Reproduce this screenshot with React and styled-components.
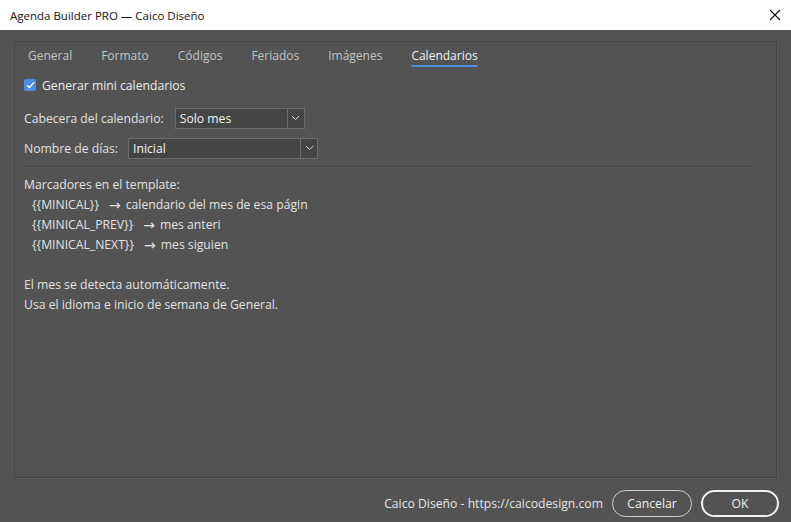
import React from 'react';
import styled, { createGlobalStyle } from 'styled-components';

const GlobalStyle = createGlobalStyle`
  html, body {
    margin: 0;
    padding: 0;
    background: #535353;
  }
  * {
    box-sizing: border-box;
  }
`;

const Window = styled.div`
  display: flex;
  flex-direction: column;
  width: 791px;
  height: 522px;
  background: #535353;
  font-family: 'Segoe UI', 'Open Sans', 'Noto Sans', sans-serif;
  font-size: 12.2px;
  color: #e2e2e2;
  overflow: hidden;
`;

const TitleBar = styled.div`
  display: flex;
  height: 30px;
  flex-shrink: 0;
  align-items: center;
  justify-content: space-between;
  padding: 0 8px 0 10px;
  background: #ffffff;
  color: #111111;
  font-size: 11.5px;
`;

const CloseButton = styled.div`
  display: flex;
  width: 16px;
  height: 16px;
  align-items: center;
  justify-content: center;
`;

const Body = styled.div`
  display: flex;
  flex: 1;
  flex-direction: column;
  padding: 11px 14px 0 14px;
`;

const Panel = styled.div`
  display: flex;
  flex: 1;
  flex-direction: column;
  padding: 0 21px 0 9px;
  border: 1px solid #474747;
  box-shadow: 1px 1px 0 #5c5c5c;
`;

const TabBar = styled.div`
  display: flex;
  height: 28px;
  align-items: center;
  padding-left: 4px;
`;

const Tab = styled.div`
  position: relative;
  margin-right: 29px;
  color: ${props => (props.active ? '#f0f0f0' : '#c4c4c4')};
  font-size: 12px;
  line-height: 16px;
  &::after {
    content: '';
    display: ${props => (props.active ? 'block' : 'none')};
    position: absolute;
    left: 0;
    right: 0;
    bottom: -3px;
    height: 2px;
    border-radius: 1px;
    background: #4d8fdc;
  }
`;

const CheckRow = styled.label`
  display: flex;
  height: 22px;
  align-items: center;
  gap: 6px;
  margin-top: 4px;
  color: #ececec;
`;

const CheckBox = styled.span`
  display: flex;
  width: 12px;
  height: 12px;
  align-items: center;
  justify-content: center;
  border-radius: 2px;
  background: #4b8ee6;
`;

const FieldRow = styled.div`
  display: flex;
  height: 30px;
  align-items: center;
  gap: ${props => props.gap}px;
  margin-top: ${props => props.top || 0}px;
  color: #e0e0e0;
`;

const Select = styled.div`
  display: flex;
  width: ${props => props.width}px;
  height: 21px;
  align-items: stretch;
  border: 1px solid #6c6c6c;
  background: #454545;
  color: #f4f4f4;
`;

const SelectValue = styled.div`
  display: flex;
  flex: 1;
  align-items: center;
  padding-left: 4px;
`;

const SelectArrow = styled.div`
  display: flex;
  width: 17px;
  align-items: center;
  justify-content: center;
  border-left: 1px solid #6c6c6c;
`;

const Separator = styled.div`
  height: 2px;
  margin: 3px 0 7px 0;
  border-top: 1px solid #464646;
  border-bottom: 1px solid #595959;
`;

const TextBlock = styled.div`
  display: flex;
  flex-direction: column;
  line-height: 20px;
  color: #e2e2e2;
`;

const Line = styled.div`
  display: flex;
  height: 20px;
  align-items: center;
  padding-left: ${props => props.indent || 0}px;
  white-space: pre;
`;

const Arrow = styled.span`
  margin: 0 5px 0 10px;
  font-family: 'DejaVu Sans', sans-serif;
  font-size: 14px;
  line-height: 20px;
`;

const Footer = styled.div`
  display: flex;
  height: 44px;
  flex-shrink: 0;
  align-items: center;
  justify-content: flex-end;
  padding: 6px 12px 0 0;
`;

const Credit = styled.span`
  margin-right: 9px;
  color: #e4e4e4;
`;

const PillButton = styled.button`
  width: ${props => props.width}px;
  height: 27px;
  margin-left: ${props => props.gap}px;
  border: ${props => (props.primary ? '2px solid #f2f2f2' : '1px solid #d0d0d0')};
  border-radius: 14px;
  background: transparent;
  color: #f0f0f0;
  font-family: inherit;
  font-size: 12.2px;
  cursor: pointer;
`;

const tabs = [
  { label: 'General' },
  { label: 'Formato' },
  { label: 'Códigos' },
  { label: 'Feriados' },
  { label: 'Imágenes' },
  { label: 'Calendarios', active: true },
];

const markers = [
  { tag: '{{MINICAL}}', desc: 'calendario del mes de esa págin' },
  { tag: '{{MINICAL_PREV}}', desc: 'mes anteri' },
  { tag: '{{MINICAL_NEXT}}', desc: 'mes siguien' },
];

const Chevron = () => (
  <svg width="9" height="6" viewBox="0 0 9 6">
    <path d="M1 1.2 L4.5 4.5 L8 1.2" fill="none" stroke="#dcdcdc" strokeWidth="1" />
  </svg>
);

const App = () => (
  <Window>
    <GlobalStyle />
    <TitleBar>
      <span>Agenda Builder PRO — Caico Diseño</span>
      <CloseButton>
        <svg width="12" height="12" viewBox="0 0 12 12">
          <path d="M1 1 L11 11 M11 1 L1 11" stroke="#111" strokeWidth="1.1" />
        </svg>
      </CloseButton>
    </TitleBar>
    <Body>
      <Panel>
        <TabBar>
          {tabs.map(t => (
            <Tab key={t.label} active={t.active}>
              {t.label}
            </Tab>
          ))}
        </TabBar>
        <CheckRow>
          <CheckBox>
            <svg width="9" height="8" viewBox="0 0 9 8">
              <path d="M1 4.2 L3.4 6.4 L8 1.4" fill="none" stroke="#ffffff" strokeWidth="1.4" />
            </svg>
          </CheckBox>
          Generar mini calendarios
        </CheckRow>
        <FieldRow gap={11} top={7}>
          Cabecera del calendario:
          <Select width={130}>
            <SelectValue>Solo mes</SelectValue>
            <SelectArrow>
              <Chevron />
            </SelectArrow>
          </Select>
        </FieldRow>
        <FieldRow gap={10}>
          Nombre de días:
          <Select width={190}>
            <SelectValue>Inicial</SelectValue>
            <SelectArrow>
              <Chevron />
            </SelectArrow>
          </Select>
        </FieldRow>
        <Separator />
        <TextBlock>
          <Line>Marcadores en el template:</Line>
          {markers.map(m => (
            <Line key={m.tag} indent={8}>
              {m.tag}
              <Arrow>→</Arrow>
              {m.desc}
            </Line>
          ))}
          <Line />
          <Line>El mes se detecta automáticamente.</Line>
          <Line>Usa el idioma e inicio de semana de General.</Line>
        </TextBlock>
      </Panel>
    </Body>
    <Footer>
      <Credit>Caico Diseño - https://caicodesign.com</Credit>
      <PillButton width={80} gap={0}>Cancelar</PillButton>
      <PillButton width={78} gap={9} primary>OK</PillButton>
    </Footer>
  </Window>
);

export default App;
